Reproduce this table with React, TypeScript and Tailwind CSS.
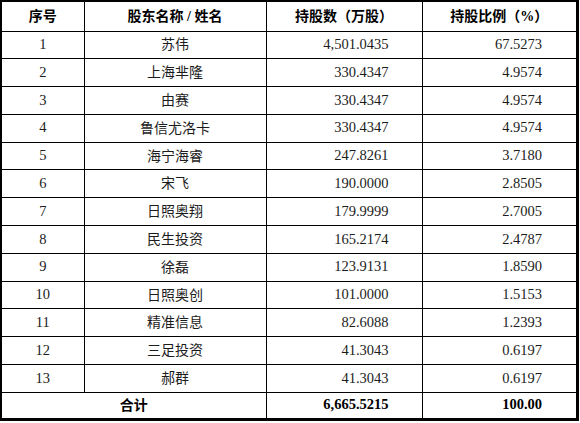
const ROWS = [
  ['1', '苏伟', '4,501.0435', '67.5273'],
  ['2', '上海芈隆', '330.4347', '4.9574'],
  ['3', '由赛', '330.4347', '4.9574'],
  ['4', '鲁信尤洛卡', '330.4347', '4.9574'],
  ['5', '海宁海睿', '247.8261', '3.7180'],
  ['6', '宋飞', '190.0000', '2.8505'],
  ['7', '日照奥翔', '179.9999', '2.7005'],
  ['8', '民生投资', '165.2174', '2.4787'],
  ['9', '徐磊', '123.9131', '1.8590'],
  ['10', '日照奥创', '101.0000', '1.5153'],
  ['11', '精准信息', '82.6088', '1.2393'],
  ['12', '三足投资', '41.3043', '0.6197'],
  ['13', '郝群', '41.3043', '0.6197'],
];

const serif = { fontFamily: '"Liberation Serif", "Noto Sans CJK SC", serif' };
const bold = { fontFamily: '"Liberation Serif", "Noto Sans CJK SC", sans-serif' };

export default function App() {
  return (
    <div className="w-[580px] h-[423px] bg-white">
      <table
        className="w-[579px] border-collapse table-fixed border-t-2 border-l-2 border-r-[3px] border-b-[3px] border-black text-[14.5px] text-[#1c1c1c]"
        style={serif}
      >
        <colgroup>
          <col className="w-[83px]" />
          <col className="w-[182px]" />
          <col className="w-[156px]" />
          <col />
        </colgroup>
        <thead>
          <tr className="h-[30px] text-[14px] font-bold text-black" style={bold}>
            <th className="border border-black">序号</th>
            <th className="border border-black">股东名称 / 姓名</th>
            <th className="border border-black">持股数（万股）</th>
            <th className="border border-black">持股比例（%）</th>
          </tr>
        </thead>
        <tbody>
          {ROWS.map((r) => (
            <tr key={r[0]} className="h-[27.8px]">
              <td className="border border-black text-center">{r[0]}</td>
              <td className="border border-black text-center text-[14px]">{r[1]}</td>
              <td className="border border-black text-right pr-[33px]">{r[2]}</td>
              <td className="border border-black text-right pr-[34px]">{r[3]}</td>
            </tr>
          ))}
          <tr className="h-[27px] font-bold text-black">
            <td colSpan={2} className="border border-black text-center text-[14px]" style={bold}>
              合计
            </td>
            <td className="border border-black text-right pr-[33px]">6,665.5215</td>
            <td className="border border-black text-right pr-[34px]">100.00</td>
          </tr>
        </tbody>
      </table>
    </div>
  );
}
